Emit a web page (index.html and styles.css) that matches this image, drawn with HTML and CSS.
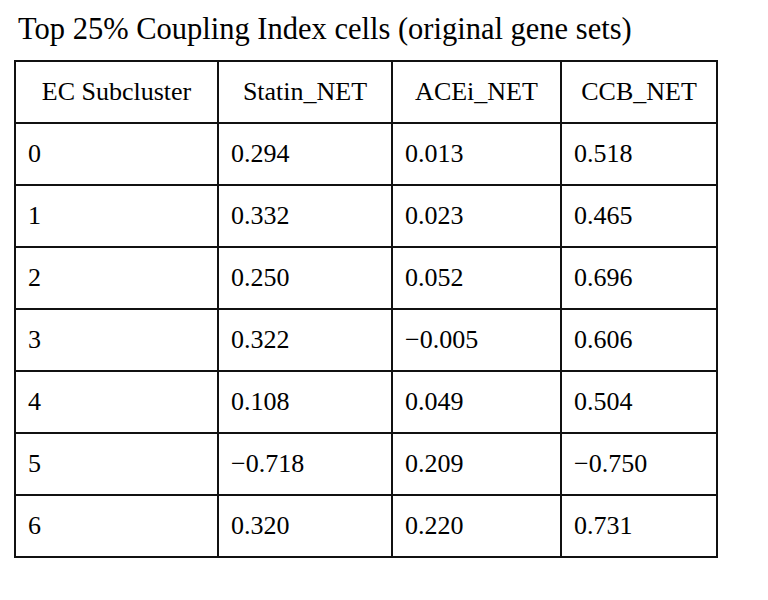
FILE: index.html
```html
<!DOCTYPE html>
<html>
<head>
<meta charset="utf-8">
<link rel="stylesheet" href="styles.css">
</head>
<body>
<div class="page">
<h1 class="title">Top 25% Coupling Index cells (original gene sets)</h1>
<table class="data">
<thead>
<tr><th class="c1">EC Subcluster</th><th class="c2">Statin_NET</th><th class="c3">ACEi_NET</th><th class="c4">CCB_NET</th></tr>
</thead>
<tbody>
<tr><td>0</td><td>0.294</td><td>0.013</td><td>0.518</td></tr>
<tr><td>1</td><td>0.332</td><td>0.023</td><td>0.465</td></tr>
<tr><td>2</td><td>0.250</td><td>0.052</td><td>0.696</td></tr>
<tr><td>3</td><td>0.322</td><td>−0.005</td><td>0.606</td></tr>
<tr><td>4</td><td>0.108</td><td>0.049</td><td>0.504</td></tr>
<tr><td>5</td><td>−0.718</td><td>0.209</td><td>−0.750</td></tr>
<tr><td>6</td><td>0.320</td><td>0.220</td><td>0.731</td></tr>
</tbody>
</table>
</div>
</body>
</html>
```
FILE: styles.css
```css
html, body {
  margin: 0;
  padding: 0;
  background: #fff;
}
.page {
  padding: 12px 0 0 14px;
  font-family: "Liberation Serif", "Times New Roman", serif;
  color: #000;
}
.title {
  margin: 0 0 0 4px;
  font-size: 30.5px;
  font-weight: normal;
  line-height: 35px;
  height: 48px;
}
.data {
  border-collapse: collapse;
  font-size: 26px;
}
.data th, .data td {
  border: 2px solid #111;
  height: 62px;
  box-sizing: border-box;
  padding: 0 12px;
  font-weight: normal;
  text-align: left;
  vertical-align: middle;
}
.data th {
  text-align: center;
}
.c1 { width: 203px; }
.c2 { width: 174px; }
.c3 { width: 169px; }
.c4 { width: 156px; }
```
